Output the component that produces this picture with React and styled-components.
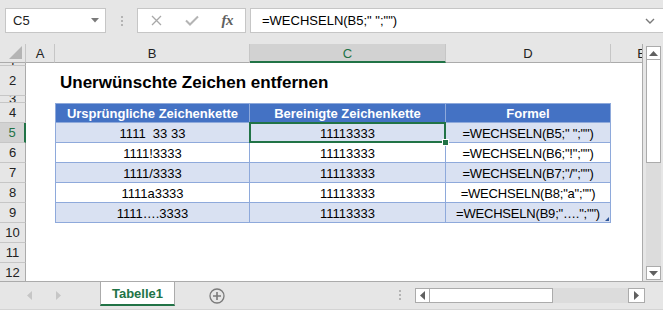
import React from "react";
import styled, { createGlobalStyle } from "styled-components";

const GREEN = "#217346";
const TABLE_BORDER = "#8ea9db";

const columns = [
  { key: "A", width: 29 },
  { key: "B", width: 195 },
  { key: "C", width: 196, selected: true },
  { key: "D", width: 165 },
  { key: "E", width: 62 },
];

const rows = [1, 2, 3, 4, 5, 6, 7, 8, 9, 10, 11, 12];
const rowHeights = { 1: 3, 2: 30, 3: 7 };

const tableData = [
  ["Ursprüngliche Zeichenkette", "Bereinigte Zeichenkette", "Formel"],
  ["1111  33 33", "11113333", '=WECHSELN(B5;" ";"")'],
  ["1111!3333", "11113333", '=WECHSELN(B6;"!";"")'],
  ["1111/3333", "11113333", '=WECHSELN(B7;"/";"")'],
  ["1111a3333", "11113333", '=WECHSELN(B8;"a";"")'],
  ["1111….3333", "11113333", '=WECHSELN(B9;"….";"")'],
];

const App = () => {
  const renderCell = (row, col, ci) => {
    const tableRow = row - 4;
    const inTable = tableRow >= 0 && tableRow < tableData.length && ci >= 1 && ci <= 3;

    if (row === 2 && col.key === "B") {
      return <TitleCell key={col.key}>Unerwünschte Zeichen entfernen</TitleCell>;
    }
    if (inTable) {
      const text = tableData[tableRow][ci - 1];
      const variant = tableRow === 0 ? "head" : tableRow % 2 === 1 ? "band" : "plain";
      return (
        <TableCell
          key={col.key}
          variant={variant}
          first={ci === 1}
          top={tableRow === 0}
          active={row === 5 && col.key === "C"}
          corner={tableRow === tableData.length - 1 && ci === 3}
          tight={ci === 3}
        >
          {text}
        </TableCell>
      );
    }
    return <EmptyCell key={col.key} />;
  };

  return (
    <Window>
      <GlobalStyle />
      <FormulaBar>
        <NameBox>
          <span>C5</span>
          <svg width="8" height="5" viewBox="0 0 8 5">
            <polygon points="0,0 8,0 4,4.5" fill="#7a7a7a" />
          </svg>
        </NameBox>
        <Grip>
          <i />
          <i />
          <i />
        </Grip>
        <FxBox>
          <ToolSlot>
            <svg width="11" height="11" viewBox="0 0 11 11">
              <path d="M1 1 L10 10 M10 1 L1 10" stroke="#a8a8a8" strokeWidth="1.3" fill="none" />
            </svg>
          </ToolSlot>
          <ToolSlot>
            <svg width="14" height="11" viewBox="0 0 14 11">
              <path d="M1 5.5 L5 9.5 L13 1.5" stroke="#b4b4b4" strokeWidth="2" fill="none" />
            </svg>
          </ToolSlot>
          <ToolSlot>
            <FxText>fx</FxText>
          </ToolSlot>
        </FxBox>
        <FormulaInput>
          <span>=WECHSELN(B5;" ";"")</span>
          <svg width="10" height="6" viewBox="0 0 10 6">
            <path d="M1 1 L5 5 L9 1" stroke="#7a7a7a" strokeWidth="1.4" fill="none" />
          </svg>
        </FormulaInput>
      </FormulaBar>

      <Main>
        <Sheet>
          <Corner>
            <svg width="13" height="13" viewBox="0 0 13 13">
              <polygon points="13,0 13,13 0,13" fill="#b4b4b4" />
            </svg>
          </Corner>
          {columns.map((col) => (
            <ColHeader key={col.key} selected={col.selected}>
              {col.key}
            </ColHeader>
          ))}
          {rows.map((row) => (
            <React.Fragment key={row}>
              <RowHeader selected={row === 5}>{row}</RowHeader>
              {columns.map((col, ci) => renderCell(row, col, ci))}
            </React.Fragment>
          ))}
        </Sheet>
        <VScroll>
          <ScrollButton>
            <svg width="9" height="5" viewBox="0 0 9 5">
              <polygon points="0,5 9,5 4.5,0" fill="#606060" />
            </svg>
          </ScrollButton>
          <VThumb />
          <Track />
          <ScrollButton>
            <svg width="9" height="5" viewBox="0 0 9 5">
              <polygon points="0,0 9,0 4.5,5" fill="#606060" />
            </svg>
          </ScrollButton>
        </VScroll>
      </Main>

      <TabBar>
        <NavArea>
          <svg width="5" height="9" viewBox="0 0 5 9">
            <polygon points="5,0 5,9 0,4.5" fill="#c6c6c6" />
          </svg>
          <svg width="5" height="9" viewBox="0 0 5 9">
            <polygon points="0,0 0,9 5,4.5" fill="#c6c6c6" />
          </svg>
        </NavArea>
        <SheetTab>Tabelle1</SheetTab>
        <AddSheet>
          <svg width="16" height="16" viewBox="0 0 16 16">
            <circle cx="8" cy="8" r="7" stroke="#7a7a7a" strokeWidth="1.3" fill="none" />
            <path d="M8 4 V12 M4 8 H12" stroke="#7a7a7a" strokeWidth="1.6" />
          </svg>
        </AddSheet>
        <Spacer />
        <Grip>
          <i />
          <i />
          <i />
        </Grip>
        <HScroll>
          <HButton>
            <svg width="5" height="9" viewBox="0 0 5 9">
              <polygon points="5,0 5,9 0,4.5" fill="#606060" />
            </svg>
          </HButton>
          <HThumb />
          <Track />
          <HButton wide>
            <svg width="5" height="9" viewBox="0 0 5 9">
              <polygon points="0,0 0,9 5,4.5" fill="#606060" />
            </svg>
          </HButton>
        </HScroll>
      </TabBar>
    </Window>
  );
};
export default App;

const GlobalStyle = createGlobalStyle`
  html, body {
    margin: 0;
    padding: 0;
  }
  body {
    font-family: "Liberation Sans", Arial, sans-serif;
    background: #e6e6e6;
  }
`;

const Window = styled.div`
  width: 663px;
  height: 310px;
  display: flex;
  flex-direction: column;
  background-color: #e6e6e6;
  overflow: hidden;
`;

const FormulaBar = styled.div`
  height: 44px;
  flex-shrink: 0;
  display: flex;
  align-items: flex-start;
  padding: 8px 0 0 5px;
  box-sizing: border-box;
`;

const NameBox = styled.div`
  width: 101px;
  height: 25px;
  box-sizing: border-box;
  background-color: #fff;
  border: 1px solid #c6c6c6;
  display: flex;
  align-items: center;
  justify-content: space-between;
  padding: 0 6px 0 7px;
  font-size: 13px;
  color: #222;
`;

const Grip = styled.div`
  width: 31px;
  height: 25px;
  display: flex;
  flex-direction: column;
  align-items: center;
  justify-content: center;
  gap: 2px;

  i {
    display: block;
    width: 2px;
    height: 2px;
    background-color: #b4b4b4;
  }
`;

const FxBox = styled.div`
  width: 109px;
  height: 25px;
  box-sizing: border-box;
  background-color: #fff;
  border: 1px solid #c6c6c6;
  display: flex;
  align-items: center;
  padding-left: 1px;
  margin-right: 4px;
`;

const ToolSlot = styled.div`
  width: 36px;
  display: flex;
  justify-content: center;
  align-items: center;
`;

const FxText = styled.span`
  font-family: "Liberation Serif", "Times New Roman", serif;
  font-style: italic;
  font-weight: 700;
  font-size: 15px;
  color: #606060;
  letter-spacing: -0.5px;
`;

const FormulaInput = styled.div`
  flex: 1;
  height: 25px;
  box-sizing: border-box;
  background-color: #fff;
  border: 1px solid #c6c6c6;
  border-right: none;
  display: flex;
  align-items: center;
  justify-content: space-between;
  padding: 0 8px 0 11px;
  font-size: 13px;
  color: #000;
`;

const Main = styled.div`
  flex: 1;
  display: flex;
  min-height: 0;
`;

const Sheet = styled.div`
  width: 643px;
  flex-shrink: 0;
  box-sizing: border-box;
  border-right: 1px solid #ababab;
  display: grid;
  grid-template-columns: 26px ${columns.map((c) => `${c.width}px`).join(" ")};
  grid-template-rows: 19px ${rows.map((r) => `${rowHeights[r] || 20}px`).join(" ")};
  overflow: hidden;
  background-color: #fff;
`;

const Corner = styled.div`
  background-color: #e6e6e6;
  border-bottom: 1px solid #ababab;
  border-right: 1px solid #c6c6c6;
  display: flex;
  align-items: flex-end;
  justify-content: flex-end;
  padding: 0 3px 3px 0;
  box-sizing: border-box;
`;

const ColHeader = styled.div`
  box-sizing: border-box;
  background-color: ${(p) => (p.selected ? "#d2d2d2" : "#e6e6e6")};
  border-right: 1px solid #c6c6c6;
  border-bottom: ${(p) => (p.selected ? `2px solid ${GREEN}` : "1px solid #ababab")};
  color: ${(p) => (p.selected ? GREEN : "#222")};
  font-size: 13px;
  display: flex;
  align-items: center;
  justify-content: center;
  padding-top: ${(p) => (p.selected ? "1px" : "0")};
`;

const RowHeader = styled.div`
  box-sizing: border-box;
  background-color: ${(p) => (p.selected ? "#d2d2d2" : "#e6e6e6")};
  border-bottom: 1px solid #c6c6c6;
  border-right: ${(p) => (p.selected ? `2px solid ${GREEN}` : "1px solid #ababab")};
  color: ${(p) => (p.selected ? GREEN : "#222")};
  font-size: 13px;
  line-height: 20px;
  display: flex;
  align-items: center;
  justify-content: center;
  overflow: hidden;
`;

const EmptyCell = styled.div`
  background-color: #fff;
`;

const TitleCell = styled.div`
  display: flex;
  align-items: flex-end;
  padding: 0 0 3px 5px;
  font-size: 17px;
  font-weight: 700;
  color: #000;
  white-space: nowrap;
  overflow: visible;
  position: relative;
  z-index: 1;
`;

const TableCell = styled.div`
  position: relative;
  box-sizing: border-box;
  display: flex;
  align-items: center;
  justify-content: center;
  padding-top: 1px;
  white-space: pre;
  font-size: 13px;
  letter-spacing: ${(p) => (p.tight && p.variant !== "head" ? "-0.2px" : "0")};
  font-weight: ${(p) => (p.variant === "head" ? 700 : 400)};
  color: ${(p) => (p.variant === "head" ? "#fff" : "#000")};
  background-color: ${(p) =>
    p.variant === "head" ? "#4472c4" : p.variant === "band" ? "#d9e1f2" : "#fff"};
  border-right: 1px solid ${TABLE_BORDER};
  border-bottom: 1px solid ${TABLE_BORDER};
  border-left: ${(p) => (p.first ? `1px solid ${TABLE_BORDER}` : "none")};
  border-top: ${(p) => (p.top ? `1px solid ${TABLE_BORDER}` : "none")};
  z-index: ${(p) => (p.active ? 2 : 0)};

  ${(p) =>
    p.active &&
    `
    &::before {
      content: "";
      position: absolute;
      top: -1px;
      left: -1px;
      right: -1px;
      bottom: -1px;
      border: 2px solid ${GREEN};
    }
    &::after {
      content: "";
      position: absolute;
      right: -4px;
      bottom: -4px;
      width: 5px;
      height: 5px;
      background-color: ${GREEN};
      border: 1px solid #fff;
    }
  `}

  ${(p) =>
    p.corner &&
    `
    &::after {
      content: "";
      position: absolute;
      right: 1px;
      bottom: 1px;
      width: 0;
      height: 0;
      border-left: 4px solid transparent;
      border-bottom: 4px solid #2f5597;
    }
  `}
`;

const VScroll = styled.div`
  flex: 1;
  display: flex;
  flex-direction: column;
  padding: 2px 2px 1px 3px;
`;

const ScrollButton = styled.div`
  height: 14px;
  flex-shrink: 0;
  box-sizing: border-box;
  background-color: #fff;
  border: 1px solid #ababab;
  display: flex;
  align-items: center;
  justify-content: center;
`;

const VThumb = styled.div`
  height: 103px;
  flex-shrink: 0;
  box-sizing: border-box;
  background-color: #fff;
  border: 1px solid #ababab;
  border-top: none;
`;

const Track = styled.div`
  flex: 1;
  background-color: #dcdcdc;
`;

const TabBar = styled.div`
  height: 29px;
  flex-shrink: 0;
  box-sizing: border-box;
  border-top: 1px solid #ababab;
  border-bottom: 1px solid #d4d4d4;
  display: flex;
  align-items: flex-start;
  background-color: #e6e6e6;
`;

const NavArea = styled.div`
  width: 100px;
  height: 27px;
  display: flex;
  align-items: center;
  gap: 24px;
  padding-left: 27px;
  box-sizing: border-box;
`;

const SheetTab = styled.div`
  width: 75px;
  height: 24px;
  box-sizing: border-box;
  background-color: #fff;
  border-left: 1px solid #ababab;
  border-right: 1px solid #ababab;
  border-bottom: 2px solid ${GREEN};
  color: ${GREEN};
  font-size: 13px;
  font-weight: 700;
  display: flex;
  align-items: center;
  justify-content: center;
  padding-top: 1px;
`;

const AddSheet = styled.div`
  margin: 6px 0 0 34px;
  width: 16px;
  height: 16px;
`;

const Spacer = styled.div`
  flex: 1;
`;

const HScroll = styled.div`
  width: 230px;
  height: 15px;
  margin: 6px 18px 0 0;
  display: flex;
`;

const HButton = styled.div`
  width: ${(p) => (p.wide ? "17px" : "15px")};
  flex-shrink: 0;
  box-sizing: border-box;
  background-color: #fff;
  border: 1px solid #ababab;
  display: flex;
  align-items: center;
  justify-content: center;
`;

const HThumb = styled.div`
  width: 123px;
  flex-shrink: 0;
  box-sizing: border-box;
  background-color: #fff;
  border: 1px solid #ababab;
  border-left: none;
`;
